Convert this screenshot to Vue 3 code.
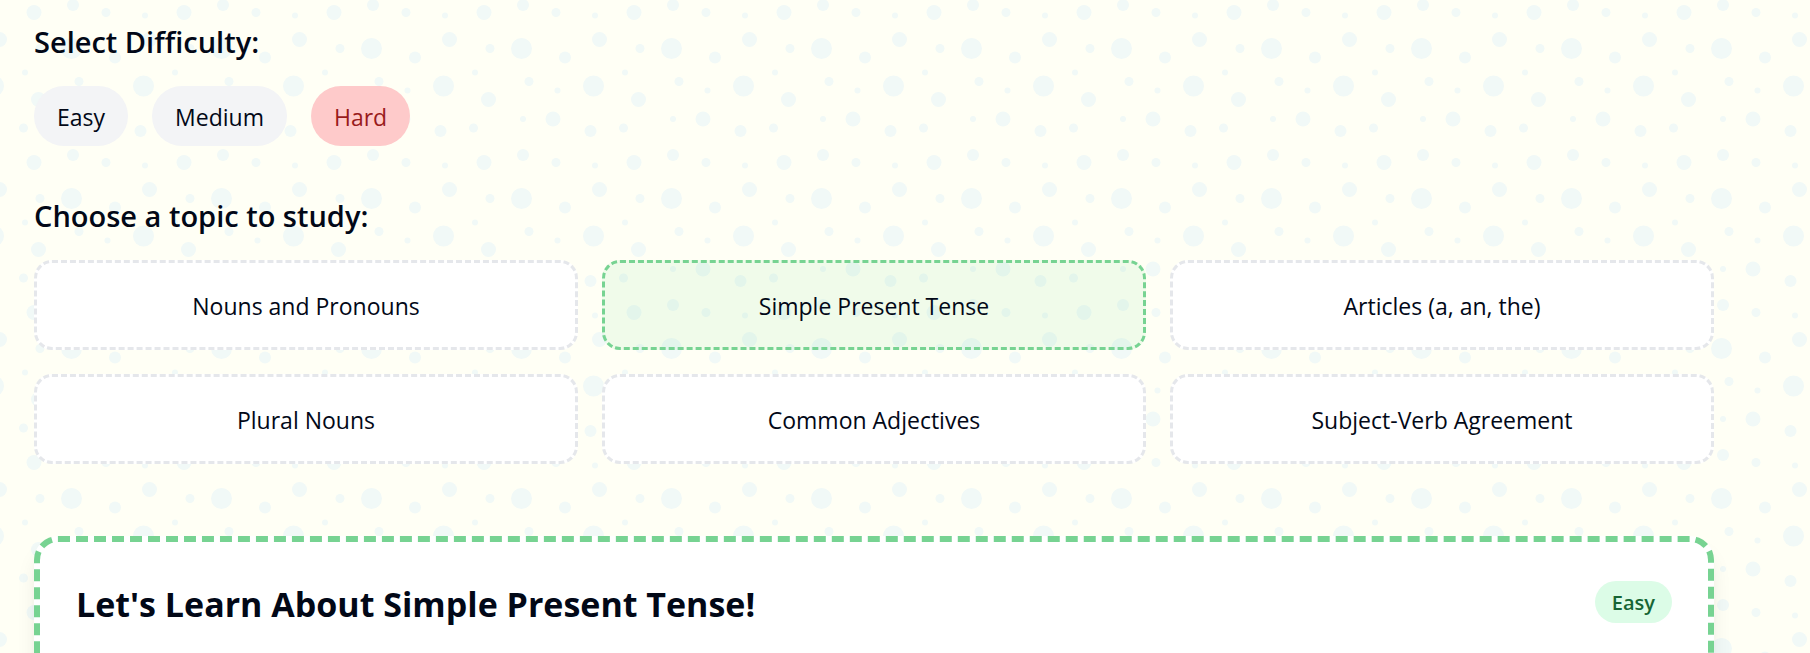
<script setup>
import { ref } from 'vue'

const levels = [
  { id: 'easy', label: 'Easy' },
  { id: 'medium', label: 'Medium' },
  { id: 'hard', label: 'Hard' },
]
const topics = [
  'Nouns and Pronouns',
  'Simple Present Tense',
  'Articles (a, an, the)',
  'Plural Nouns',
  'Common Adjectives',
  'Subject-Verb Agreement',
]

const level = ref('hard')
const topic = ref('Simple Present Tense')

// Bubble centres and radii on a 100 x 100 tile
const bubbles = [
  [11, 11, 7], [59, 36, 7],
  [86, 87, 5], [63, 5, 5], [89, 45, 5], [32, 58, 5],
  [12, 82, 4], [40, 17, 4], [57, 66, 4],
  [34, 87, 3], [90, 11, 3], [16, 33, 3], [79, 64, 3],
  [60, 89, 2], [80, 27, 2], [35, 39, 2], [12, 58, 2],
]
</script>

<template>
  <div class="page">
    <svg class="backdrop" aria-hidden="true">
      <defs>
        <pattern id="bubbles" width="100" height="100" patternUnits="userSpaceOnUse"
          patternTransform="translate(55 32) scale(1.5)">
          <circle v-for="([x, y, r], i) in bubbles" :key="i" :cx="x" :cy="y" :r="r" />
        </pattern>
      </defs>
      <rect width="100%" height="100%" fill="url(#bubbles)" />
    </svg>

    <main class="content">
      <section class="difficulty">
        <h2>Select Difficulty:</h2>
        <div class="pills">
          <button v-for="l in levels" :key="l.id" type="button" class="pill"
            :class="level === l.id && ['active', l.id]" :aria-pressed="level === l.id"
            @click="level = l.id">{{ l.label }}</button>
        </div>
      </section>

      <section class="topics">
        <h2>Choose a topic to study:</h2>
        <div class="grid">
          <button v-for="t in topics" :key="t" type="button" class="topic"
            :class="{ selected: topic === t }" :aria-pressed="topic === t"
            @click="topic = t">{{ t }}</button>
        </div>
      </section>

      <article class="lesson">
        <header>
          <h1>Let's Learn About {{ topic }}!</h1>
          <span class="badge">Easy</span>
        </header>
      </article>
    </main>
  </div>
</template>

<style>
body {
  background: #fffff5;
}
</style>

<style scoped>
.page {
  position: relative;
  height: 100vh;
  overflow: hidden;
  box-sizing: border-box;
  padding: 20px 96px 0 34px;
  color: #020817;
  font-family: "Segoe UI", "Open Sans", "Noto Sans", sans-serif;
  font-size: 23px;
  line-height: 36px;
}
.backdrop {
  position: absolute;
  inset: 0;
  width: 100%;
  height: 100%;
  fill: #f1f9f7;
}
.content {
  position: relative;
}
h1,
h2 {
  margin: 0;
}
h2 {
  margin-bottom: 22px;
  font-size: 29px;
  font-weight: 600;
  line-height: 44px;
}
.difficulty {
  margin-bottom: 48px;
}
.pills {
  display: flex;
  gap: 24px;
}
button {
  font: inherit;
  color: inherit;
  cursor: pointer;
}
.pill {
  padding: 13px 23px 11px;
  border: 0;
  border-radius: 30px;
  background: #f3f4f6;
}
.pill.easy {
  background: #bbf7d0;
  color: #166534;
}
.pill.medium {
  background: #fef08a;
  color: #854d0e;
}
.pill.hard {
  background: #fecaca;
  color: #991b1b;
}
.grid {
  display: grid;
  grid-template-columns: repeat(3, 1fr);
  gap: 24px;
}
.topic {
  padding: 25px 24px 23px;
  border: 3px dashed #e5e7eb;
  border-radius: 18px;
  background: #fff;
}
.topic.selected {
  border-color: #77d392;
  background: rgba(119, 221, 146, 0.11);
}
.lesson {
  min-height: 300px;
  margin-top: 72px;
  padding: 36px;
  border: 6px dashed #77d392;
  border-radius: 24px;
  background: #fff;
  box-shadow: 0 15px 22px -4px rgba(0, 0, 0, 0.1), 0 6px 9px -6px rgba(0, 0, 0, 0.1);
}
.lesson header {
  display: flex;
  align-items: center;
  justify-content: space-between;
}
h1 {
  padding-top: 4px;
  font-size: 34px;
  font-weight: 700;
  line-height: 44px;
}
.badge {
  padding: 7px 17px 5px;
  border-radius: 21px;
  background: #dcfce7;
  color: #166534;
  font-size: 20px;
  font-weight: 600;
  line-height: 30px;
}
</style>
